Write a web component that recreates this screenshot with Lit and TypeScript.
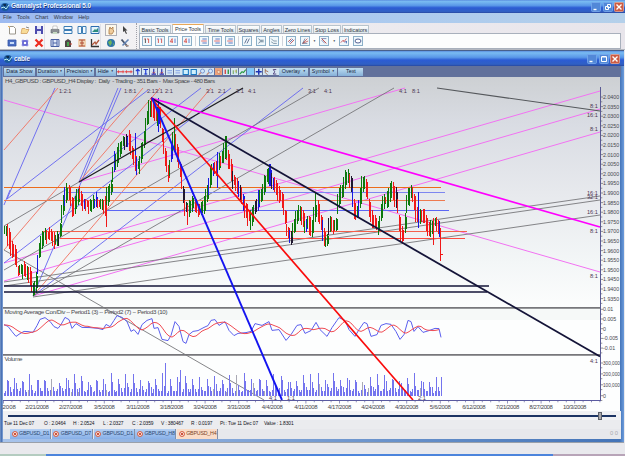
import { css, html, LitElement, svg, SVGTemplateResult } from 'lit';
import { customElement, property } from 'lit/decorators.js';
import { classMap } from 'lit/directives/class-map.js';
import { styleMap } from 'lit/directives/style-map.js';

type Point = [number, number];

// x1, y1, x2, y2, color, width
type Line = [number, number, number, number, string, number];

const BLUE = '#6464f0';
const RED = '#f0705f';
const PINK = '#f272f2';
const GRAY = '#77777b';
const NAVY = '#141438';

/** Center line of the price, the bars are built around it. */
const PRICE: Point[] = [
  [4, 233], [8, 232], [9, 243], [12, 252], [15, 254], [16, 268], [19, 272], [23, 268], [26, 273], [29, 270],
  [32, 293], [35, 285], [37, 278], [38, 262], [41, 243], [44, 235], [48, 236], [52, 237], [55, 242], [58, 236],
  [60, 240], [61, 228], [63, 204], [65, 196], [68, 190], [72, 206], [75, 210], [78, 193], [82, 200], [86, 205],
  [90, 206], [94, 200], [99, 204], [103, 203], [106, 210], [108, 192], [112, 185], [115, 160], [118, 153], [121, 145],
  [125, 142], [128, 137], [131, 150], [135, 160], [138, 168], [141, 158], [144, 140], [147, 122], [150, 103], [153, 110],
  [156, 116], [159, 112], [162, 142], [165, 160], [168, 176], [170, 172], [173, 137], [176, 150], [179, 165], [181, 185],
  [183, 203], [186, 213], [190, 205], [194, 202], [200, 213], [204, 205], [207, 192], [210, 180], [213, 166], [217, 172],
  [219, 158], [222, 160], [225, 149], [229, 160], [232, 180], [236, 185], [240, 193], [244, 206], [249, 220], [253, 212],
  [257, 205], [260, 195], [263, 190], [266, 180], [269, 172], [272, 182], [276, 190], [280, 195], [283, 205], [285, 230],
  [290, 238], [294, 228], [296, 218], [299, 214], [301, 209], [303, 228], [308, 220], [312, 233], [315, 212], [317, 205],
  [320, 220], [324, 243], [328, 242], [330, 218], [334, 228], [337, 222], [339, 195], [343, 186], [345, 180], [349, 175],
  [352, 202], [355, 212], [359, 210], [362, 184], [366, 182], [368, 208], [373, 220], [378, 228], [381, 218], [383, 202],
  [387, 203], [390, 192], [392, 187], [396, 200], [398, 225], [402, 235], [405, 236], [407, 205], [409, 195], [412, 192],
  [414, 213], [418, 216], [421, 213], [424, 217], [427, 225], [429, 230], [432, 224], [434, 223], [437, 221], [439, 230],
];

const MACD: Point[] = [
  [4, 325], [8, 326], [12, 332], [16, 336], [20, 334], [24, 331], [28, 332], [33, 332], [37, 326], [40, 319],
  [45, 318], [50, 321], [54, 327], [58, 328], [61, 325], [65, 317], [69, 320], [72, 328], [76, 324], [82, 327],
  [90, 328], [98, 328], [103, 330], [106, 324], [110, 327], [114, 320], [117, 316], [122, 317], [127, 322], [131, 331],
  [134, 330], [138, 334], [142, 325], [147, 320], [152, 319], [154, 328], [158, 328], [162, 339], [168, 341], [171, 335],
  [175, 322], [179, 326], [183, 342], [186, 343], [189, 335], [193, 331], [198, 331], [204, 327], [208, 326], [211, 320],
  [215, 320], [219, 325], [225, 322], [229, 330], [234, 336], [238, 333], [246, 333], [251, 331], [255, 324], [262, 325],
  [269, 322], [272, 330], [279, 330], [286, 340], [291, 335], [297, 325], [301, 325], [305, 333], [311, 331], [316, 322],
  [320, 330], [327, 336], [332, 328], [337, 320], [339, 318], [345, 320], [349, 330], [355, 336], [359, 330], [364, 322],
  [367, 324], [371, 336], [377, 335], [381, 325], [386, 324], [391, 324], [396, 332], [400, 339], [404, 335], [408, 320],
  [411, 322], [414, 331], [418, 327], [423, 332], [429, 331], [435, 328], [439, 329], [441, 337],
];

const THIN_LINES: Line[] = [
  [4, 100, 600, 272, PINK, 1],
  [79, 182, 405, 88, PINK, 1],
  [4, 263, 600, 91, PINK, 1],
  [4, 281, 600, 109, PINK, 1],
  [33, 296, 600, 132, PINK, 1],
  [7, 199, 55, 88, BLUE, 0.9],
  [7, 199, 148, 90, BLUE, 0.9],
  [79, 182, 118, 88, BLUE, 0.9],
  [33, 296, 121, 88, BLUE, 0.9],
  [4, 205, 10, 190, BLUE, 0.9],
  [79, 182, 201, 88, BLUE, 0.9],
  [4, 263, 231, 88, BLUE, 0.9],
  [33, 296, 303, 88, BLUE, 0.9],
  [4, 150, 58, 88, RED, 0.9],
  [4, 250, 143, 88, RED, 0.9],
  [79, 182, 160, 88, RED, 0.9],
  [33, 296, 211, 88, RED, 0.9],
  [4, 226, 79, 182, GRAY, 0.9],
  [4, 270, 319, 88, GRAY, 0.9],
  [33, 296, 394, 88, GRAY, 0.9],
  [4, 282, 600, 196, GRAY, 0.9],
  [4, 286, 600, 200, GRAY, 0.9],
  [33, 297, 600, 215, GRAY, 0.9],
  [437, 88, 600, 111, '#55585c', 1.2],
  [4, 250, 264, 400, GRAY, 0.9],
];

const LEVELS: Line[] = [
  [4, 187.5, 441, 187.5, '#ec6c1c', 1],
  [68, 192.5, 445, 192.5, '#7d86f0', 1],
  [4, 200.5, 445, 200.5, '#ee7a50', 1],
  [107, 210.5, 449, 210.5, '#5c66f4', 1],
  [43, 231.5, 467, 231.5, '#f4604c', 1],
  [60, 238.5, 465, 238.5, '#fc4c40', 1],
];

const BOLD_LINES: Line[] = [
  [79, 182, 243, 88, '#1c1c20', 1.3],
  [4, 286, 489, 286, NAVY, 1.5],
  [4, 292, 487, 292, NAVY, 1.5],
  [151, 98, 600, 227, '#ff00ff', 1.6],
  [151, 98, 600, 356.5, NAVY, 1.8],
  [151, 98, 413, 400, '#fa0a0a', 1.7],
  [152, 98, 282, 400, '#1414f0', 1.9],
];

const RATIOS: [number, number, string][] = [
  [59, 93, '1:2:1'], [124, 93, '1:8:1'], [147, 93, '2:1'], [155, 93, '3:1'], [165, 93, '2:1'],
  [206, 93, '3:1'], [218, 93, '2:1'], [236, 93, '3:1'], [248, 93, '4:1'], [308, 93, '3:1'],
  [324, 93, '4:1'], [399, 93, '4:1'], [412, 93, '8:1'],
  [590, 107.5, '8:1'], [587, 117, '16:1'], [590, 131, '8:1'], [587, 194.5, '16:1'], [587, 199, '32:1'],
  [587, 214, '16:1'], [590, 232.5, '8:1'], [590, 278, '8:1'], [590, 362.5, '4:1'],
  [269, 399.5, '4:1'], [287, 399.5, '1:1'], [418, 399.5, '2:1'],
];

const DATES = [
  '2/15/2008', '2/21/2008', '2/27/2008', '3/5/2008', '3/11/2008', '3/18/2008', '3/24/2008', '3/31/2008', '4/4/2008',
  '4/11/2008', '4/17/2008', '4/24/2008', '4/30/2008', '5/6/2008', '6/12/2008', '7/21/2008', '8/27/2008', '10/3/2008',
];

const ICONS: Record<string, SVGTemplateResult> = {
  app: svg`<circle cx="5" cy="5" r="4" fill="#1c5c9c"/><path d="M1 6l3-1 2 2 3-4" stroke="#b8ecf4" fill="none"/><path d="M3 2h3v2H4z" fill="#0b2c50"/>`,
  file: svg`<path d="M2.500 1.500h4l2 2v5.500h-6z" fill="#fff" stroke="#9a968c"/><path d="M1 1l2 2" stroke="#f0b050"/>`,
  open: svg`<path d="M1 8.500l1-5h3l1 1h3l-2 4z" fill="#f8dc98" stroke="#d0a060" stroke-width=".8"/><path d="M6 2l3 1" stroke="#888"/>`,
  save: svg`<path d="M1 1h8v8H1z" fill="#4c4cae"/><path d="M3 1h4v3H3zM3 6h4v3H3z" fill="#e4e6fa"/>`,
  print: svg`<path d="M1 4.500h8v3.500H1z" fill="#8c9094" stroke="#5f666c" stroke-width=".6"/><path d="M3 1h4l.5 3h-5z" fill="#fff" stroke="#999" stroke-width=".5"/><path d="M3 7h4v2H3z" fill="#c8dcc4"/>`,
  tileH: svg`<path d="M1 1.500h8v3H1zM1 5.500h8v3H1z" fill="#f4faff" stroke="#3c7cb4"/>`,
  tileV: svg`<path d="M1 1.500h3.500v7H1zM5.500 1.500H9v7H5.500z" fill="#f4faff" stroke="#3c7cb4"/>`,
  picture: svg`<path d="M1 1.500h8v7H1z" fill="#e4f4fc" stroke="#2c6cb0"/><path d="M2 7l3-3 1 1 2-2v4z" fill="#2c8c7c"/>`,
  hand: svg`<path d="M3 9V5l1-3 1 2 2-2v3l1 1-2 3z" fill="#f0cc9c" stroke="#a87848" stroke-width=".8"/>`,
  arrow: svg`<path d="M3 1v6l1.500-1 1.500 3 1-.5-1.500-3h2z" fill="#444"/>`,
  monitor: svg`<path d="M1 2h8v6H1z" fill="#4c70c4" stroke="#3454a4" stroke-width=".8"/><path d="M3 4h4v2H3z" fill="#c8dcfa"/>`,
  square: svg`<path d="M3 3h4v4H3z" fill="#fff" stroke="#3c3cc4" stroke-width="1.500"/><path d="M1 3h8M1 7h8M3 1v8M7 1v8" stroke="#8c8ce4" stroke-width=".5"/>`,
  cross: svg`<path d="M1.500 1.500l7 7M8.500 1.500l-7 7" stroke="#ec2c20" stroke-width="2.200"/>`,
  film: svg`<path d="M1 1.500h8v7H1z" fill="#e0e8f8" stroke="#4860a4"/><path d="M3 1v8M7 1v8M3 5h4" stroke="#4860a4"/>`,
  door: svg`<path d="M2 9V3l3-2 3 2v6z" fill="#504848"/><path d="M4 4h2v4H4z" fill="#48a450"/><path d="M6 6h3" stroke="#c43c2c"/>`,
  clock: svg`<path d="M1 1h8v8H1z" fill="#f0d4b4"/><path d="M2 2h6M5 2v6M2 8h6M3 5h4" stroke="#b04c34"/>`,
  graph: svg`<path d="M1.500 1v7.500H9" stroke="#333" fill="none" stroke-width="1.300"/><path d="M2 7l3-3 1 2 3-4" stroke="#b0583c" fill="none" stroke-width="1.300"/>`,
  globe: svg`<circle cx="5" cy="5" r="4" fill="#2c74a8"/><path d="M2 4l3-2 1 3-2 3zM7 5l1 1-1 2z" fill="#70b45c"/>`,
  tools: svg`<path d="M1.500 1.500l6 7" stroke="#48546c" fill="none" stroke-width="1.900"/><path d="M8.500 1.500l-6 6" stroke="#6484b4" stroke-width="1.600"/><path d="M5 7l4 1" stroke="#b49484"/>`,
  range1: svg`<path d="M3 2v5.500" stroke="#333"/><path d="M1.500 2.500h1.500M5 2.500h2v5" stroke="#d83c34" fill="none"/>`,
  range2: svg`<path d="M3 2v5.500M7 2v5.500" stroke="#d83c34"/><path d="M1.500 2.500h1M5.500 2.500h1" stroke="#3c54c4"/>`,
  range4: svg`<path d="M4 2L1.500 6h3.500M4 2v5.500" stroke="#d83c34" fill="none" stroke-width=".9"/><path d="M7.500 2v5.500" stroke="#4460c4"/>`,
  bars: svg`<path d="M3 2.500h5.500M3 7.500h5.500" stroke="#3858b4"/><path d="M1.500 5h7" stroke="#e05050"/>`,
  parallel: svg`<path d="M2 8l3-6M5 8l3-6" stroke="#48587c"/>`,
  fan: svg`<path d="M1.500 2l3 2h4M1.500 8l3-2h4M3 5h4" stroke="#48647c" fill="none" stroke-width=".8"/>`,
  fan2: svg`<path d="M1.500 2l3 3h4M1.500 6l3 2h4" stroke="#48647c" fill="none" stroke-width=".8"/>`,
  hatch: svg`<path d="M1.500 6l4-4M4 8.500l5-5" stroke="#b43c44"/><path d="M3 7l4.500-4.500" stroke="#4c64a4"/>`,
  gann: svg`<path d="M2 8l6-6M2 8l7-3" stroke="#c4504c"/><path d="M2 8l3-6M2 8h6" stroke="#4c5c7c" stroke-width=".8"/>`,
  gann2: svg`<path d="M2 2l6 6" stroke="#c4504c" stroke-width="1.200"/><path d="M2 2h6M2 4l4 4" stroke="#4c5c94" stroke-width=".8"/>`,
  wave: svg`<path d="M1 7l3-3 1 2 3-4" stroke="#c43c44" fill="none"/><path d="M6 7l2-2v3" stroke="#3454a4" fill="none"/>`,
  ellipse: svg`<ellipse cx="5" cy="5" rx="3.700" ry="2.500" fill="#fff" stroke="#3c4c84" stroke-width="1.100"/>`,
  inOut: svg`<path d="M0 5h10" stroke="#e83c3c" stroke-width="1.400"/><path d="M2 3v4M8 3v4" stroke="#e83c3c"/>`,
  up: svg`<path d="M5 9V2M2.500 4L5 1.500 7.500 4" stroke="#1c34d4" fill="none" stroke-width="1.500"/>`,
  upBar: svg`<path d="M2 2h6M5 2v7M3 8h4" stroke="#1c34d4" stroke-width="1.500"/>`,
  down: svg`<path d="M5 1v7M2 8h6" stroke="#2c2cb0" stroke-width="1.600"/><path d="M3 5l2 2 2-2" stroke="#c44" fill="none"/>`,
  minus: svg`<path d="M2 3.500h6M2 6.500h6" stroke="#7c9ce4" stroke-width="1.200"/>`,
  window: svg`<path d="M1.500 2h7v6.500h-7z" fill="#cff0fc" stroke="#1878c4" stroke-width="1.400"/>`,
  zoom: svg`<circle cx="6" cy="4" r="2.700" fill="#d4e8fc" stroke="#5c7cc4"/><path d="M4 6L1 9" stroke="#c48c7c" stroke-width="1.700"/>`,
  palm: svg`<path d="M0 0h10v10H0z" fill="#f0a47c"/><path d="M3 3l4 1-1 4-3-2z" fill="#fce4c4" stroke="#b0583c" stroke-width=".6"/>`,
  candles: svg`<path d="M3 2v6" stroke="#d42c2c" stroke-width="1.600"/><path d="M7 2v6" stroke="#1c8c2c" stroke-width="1.600"/>`,
  ohlc: svg`<path d="M3 3v5M7 2v5" stroke="#6ca44c" stroke-width="1.300"/><path d="M5 4h2" stroke="#e8a030"/>`,
  trend: svg`<path d="M1 8l3-3 2 1 3-4" stroke="#2c9c44" fill="none" stroke-width="1.500"/>`,
  cyan: svg`<path d="M0 0h10v10H0z" fill="#84c8f8"/>`,
  plus: svg`<path d="M5 1v8M1 5h8" stroke="#1c34b4" stroke-width="2"/>`,
  curve: svg`<path d="M3 1v5l3 3M3 3l4 2" stroke="#a46c4c" fill="none" stroke-width="1.200"/>`,
  sigma: svg`<path d="M7 2H3l2 3-2 3h4" stroke="#4c3c7c" fill="none" stroke-width="1.200"/>`,
};

function seeded(seed: number) {
  return () => {
    seed = (seed * 16807) % 2147483647;
    return seed / 2147483647;
  };
}

function valueAt(points: Point[], x: number) {
  for (let i = 1; i < points.length; i++) {
    const [x1, y1] = points[i - 1];
    const [x2, y2] = points[i];
    if (x <= x2) return y1 + ((y2 - y1) * (x - x1)) / (x2 - x1);
  }
  return points[points.length - 1][1];
}

@customElement('tool-icon')
export class ToolIcon extends LitElement {
  static styles = css`
    :host {
      display: block;
      width: 10px;
      height: 10px;
      flex: none;
    }

    svg {
      display: block;
      width: 100%;
      height: 100%;
    }
  `;

  @property({ type: String })
  name = 'file';

  protected render() {
    return html`<svg viewBox="0 0 10 10">${ICONS[this.name]}</svg>`;
  }
}

@customElement('window-controls')
export class WindowControls extends LitElement {
  static styles = css`
    :host {
      display: flex;
      gap: 1.5px;
    }

    svg {
      width: 10px;
      height: 10px;
      display: block;
    }
  `;

  @property({ type: Boolean })
  restore = false;

  protected render() {
    const frame = svg`<rect x=".5" y=".5" width="9" height="9" rx="1" fill="#5288d8" stroke="#78aaec" stroke-width=".8"/>`;
    return html`
      <svg viewBox="0 0 10 10">${frame}<path d="M2.500 7.500h3" stroke="#fff" stroke-width="1.400" /></svg>
      <svg viewBox="0 0 10 10">
        ${frame}
        ${this.restore
          ? svg`<path d="M4.500 2.500h3v3h-3zM2.500 4.500h3v3h-3z" fill="#5288d8" stroke="#fff"/>`
          : svg`<path d="M2.500 3h5v4.500h-5zM2.500 2.500h5" fill="none" stroke="#fff"/>`}
      </svg>
      <svg viewBox="0 0 10 10">
        <rect x=".5" y=".5" width="9" height="9" rx="1" fill="#cc5c44" stroke="#e8a490" stroke-width=".8" />
        <path d="M2.500 2.500l5 5M7.500 2.500l-5 5" stroke="#fff" stroke-width="1.400" />
      </svg>
    `;
  }
}

@customElement('price-chart')
export class PriceChart extends LitElement {
  static styles = css`
    :host {
      display: block;
      flex: none;
      width: 617px;
      height: 334px;
    }

    svg {
      display: block;
      overflow: visible;
    }

    text {
      font-family: 'Liberation Sans', Arial, sans-serif;
      font-size: 6.2px;
      fill: #48484e;
    }

    .ratio {
      font-size: 5.6px;
      fill: #4c3450;
    }

    .axis {
      font-size: 6px;
    }

    .scale {
      font-size: 5.3px;
    }

    .scale.long {
      font-size: 4.7px;
    }
  `;

  private lines(lines: Line[]) {
    return lines.map(
      ([x1, y1, x2, y2, color, width]) =>
        svg`<line x1=${x1} y1=${y1} x2=${x2} y2=${y2} stroke=${color} stroke-width=${width} />`,
    );
  }

  private candles() {
    const random = seeded(77);
    const result: SVGTemplateResult[] = [];
    let i = 0;
    for (let x = 4; x < 440; x += 1.5) {
      const open = valueAt(PRICE, x - 0.8);
      const close = valueAt(PRICE, x + 1.6);
      const noise = (random() - 0.5) * 5;
      const top = Math.min(open, close) + noise - 2;
      const height = Math.min(12, Math.abs(close - open) + 3 + random() * 3);
      const pick = random();
      let color = close > open ? '#f01818' : '#0c780c';
      if (pick > 0.93) color = '#1a1ae0';
      else if (pick > 0.87) color = '#201830';
      const wick = 1 + random() * 4;
      result.push(svg`
        <rect x=${Math.round(x)} y=${top - wick} width="1" height=${height + wick * 2} fill=${color} />
        <rect x=${Math.round(x)} y=${top} width=${i % 2 ? 2 : 1} height=${height} fill=${color} />
      `);
      i++;
    }
    // single long bars
    const spikes: Line[] = [
      [106, 205, 106, 227, '#f01818', 1],
      [135.5, 133, 135.5, 155, '#1a1ae0', 1.2],
      [158.5, 98, 158.5, 132, '#1a1ae0', 1.2],
      [174.5, 118, 174.5, 150, '#0c780c', 1.2],
      [187.5, 205, 187.5, 225, '#f01818', 1],
      [217.5, 152, 217.5, 188, '#1a1ae0', 1.2],
      [226, 136, 226, 158, '#0c780c', 1.2],
      [270, 164, 270, 186, '#1a1ae0', 1.2],
      [315.5, 192, 315.5, 222, '#0c780c', 1.2],
      [418.5, 192, 418.5, 228, '#1a1ae0', 1.4],
      [433.5, 218, 433.5, 245, '#f01818', 1],
      [440.5, 228, 440.5, 261, '#f01818', 1.2],
      [440, 254.5, 443, 254.5, '#f01818', 1],
    ];
    return [result, this.lines(spikes)];
  }

  private volume() {
    const random = seeded(421);
    const shape = [5, 7, 20, 14, 8];
    const result: SVGTemplateResult[] = [];
    let i = 0;
    for (let x = 4; x < 441; x += 1.48) {
      let height = shape[i % 5] * (0.65 + random() * 0.5);
      if (Math.abs(x - 165) < 0.74) height = 33;
      if (Math.abs(x - 180) < 0.74) height = 26;
      if (x > 439.8) height = 19;
      const color = random() > 0.93 ? '#a9a9b4' : '#7474ee';
      result.push(svg`<rect x=${x} y=${396 - height} width="1" height=${height} fill=${color} />`);
      i++;
    }
    return result;
  }

  private signal() {
    const points: string[] = [];
    for (let x = 4; x < 440; x += 3) {
      let sum = 0;
      for (let k = 0; k < 8; k++) sum += valueAt(MACD, Math.max(4, x - k * 1.8));
      points.push(`${x},${(sum / 8).toFixed(1)}`);
    }
    return points.join(' ');
  }

  private axes() {
    const price = Array.from({ length: 22 }, (_, i) => ({ y: 97 + i * 9.6, label: (2.04 - i * 0.005).toFixed(4) }));
    const macd = ['0.01', '0.005', '0', '-0.005', '-0.01'].map((label, i) => ({ y: 309.3 + i * 9.7, label }));
    const volume = ['300,000', '200,000', '100,000', '0'].map((label, i) => ({ y: 363 + i * 10.9, label }));
    return svg`
      <path d="M600.500 87V400.500" stroke="#5a5a94" />
      ${[...price, ...macd, ...volume].map(
        ({ y, label }) => svg`
          <path d="M601 ${y}h2.200M601 ${y + 4.8}h1.300" stroke="#66666e" stroke-width=".7" />
          <text class=${label.length > 6 ? 'scale long' : 'scale'} x="603" y=${y + 2}>${label}</text>`,
      )}
      <path d="M3 400.500H601" stroke="#5a5aa0" />
      ${DATES.map((date, i) => {
        const x = 3.5 + i * 33.6;
        return svg`
          <path d="M${x} 401v2.500M${x + 8.4} 401v1.300M${x + 16.8} 401v1.300M${x + 25.2} 401v1.300" stroke="#66669c" stroke-width=".7" />
          ${i === 0
            ? svg`<text class="axis" x="2.500" y="408.800">2008</text>`
            : svg`<text class="axis" x=${x} y="408.800" text-anchor="middle" textLength=${date.length > 8 ? 23.5 : 21}>${date}</text>`}`;
      })}
    `;
  }

  protected render() {
    return html`
      <svg width="617" height="334" viewBox="3 77 617 334">
        <defs>
          <linearGradient id="sky" x1="0" y1="0" x2="0" y2="1">
            <stop offset="0" stop-color="#cdd0d3" />
            <stop offset=".2" stop-color="#d9dce3" />
            <stop offset=".5" stop-color="#e7e9ed" />
            <stop offset=".8" stop-color="#f3f6f7" />
            <stop offset="1" stop-color="#fcfdfd" />
          </linearGradient>
        </defs>
        <rect x="3" y="77" width="617" height="334" fill="#fdfefe" />
        <rect x="3" y="77" width="617" height="231" fill="url(#sky)" />
        <rect x="3" y="308" width="597" height="12" fill="#f6f9f8" />
        <path d="M3 307.800H600M3 354.800H600" stroke="#77777b" stroke-width="1.700" />
        ${this.lines(THIN_LINES)} ${this.lines(LEVELS)}
        <g shape-rendering="crispEdges">${this.candles()} ${this.volume()}</g>
        <polyline
          points=${MACD.map(([x, y], i) => `${x},${y + (i % 2 ? 0.4 : -0.4)}`).join(' ')}
          fill="none"
          stroke="#5c60ee"
        />
        <polyline points=${this.signal()} fill="none" stroke="#f04c54" />
        ${this.lines(BOLD_LINES)} ${this.axes()}
        <text x="5" y="83.300" textLength="210" xml:space="preserve">H4_GBPUSD : GBPUSD_H4 Display :  Daily  - Trading - 351 Bars -  Max Space - 480 Bars</text>
        <text x="4.500" y="313.800" textLength="163">Moving Average Con/Div -- Period1 (3) -- Period2 (7) -- Period3 (10)</text>
        <text x="4.500" y="360.800" textLength="18">Volume</text>
        ${RATIOS.map(([x, y, label]) => svg`<text class="ratio" x=${x} y=${y}>${label}</text>`)}
      </svg>
    `;
  }
}

@customElement('app-root')
export class AppRoot extends LitElement {
  static styles = css`
    :host {
      display: flex;
      flex-direction: column;
      width: 625px;
      height: 456px;
      overflow: hidden;
      background: #e9e9ed;
      font: 5.8px/1 'Liberation Sans', Arial, sans-serif;
      color: #303844;
      white-space: nowrap;
      box-sizing: border-box;
    }

    .titlebar {
      display: flex;
      align-items: center;
      flex: none;
      box-sizing: border-box;
      height: 13px;
      padding: 0 1px 0 0;
      gap: 1px;
      color: #eef6ff;
      font-weight: bold;
      font-size: 6.5px;
      letter-spacing: -0.12px;
      text-shadow: 0.5px 0.5px #18387c;
      background: linear-gradient(#5c90e0 0, #79bbf2 12%, #5a98e8 42%, #2c5cd4 60%, #3060c4 88%, #2848a0);
    }

    .titlebar .label {
      flex: 1;
    }

    .menu {
      display: flex;
      align-items: center;
      flex: none;
      height: 10px;
      padding-left: 3px;
      gap: 5.4px;
      font-size: 5.4px;
      background: linear-gradient(90deg, #9dbaf0, #a9c8f0 50%, #b4d0ea);
    }

    .tools {
      display: flex;
      flex: none;
      height: 27px;
      box-sizing: border-box;
      background: linear-gradient(90deg, #fafafa, #f0eff2 25%, #e8e5eb);
      border-bottom: 1px solid #b4b8c0;
    }

    .groups {
      display: flex;
      width: 137px;
      box-sizing: border-box;
      padding: 1px 0 0 7px;
      gap: 5px;
      border-right: 1px dotted #a0a0a8;
    }

    .group {
      display: grid;
      grid-auto-flow: column;
      grid-template-rows: 12.5px 12.5px;
      column-gap: 3.3px;
      align-items: center;
      padding-right: 0.5px;
      border-right: 1px solid #e0e0e6;
    }

    .group:last-child {
      border: none;
    }

    .pressed {
      background: #fdf8ec;
      outline: 1px solid #b0b0b8;
    }

    .panel {
      flex: 1;
      display: flex;
      flex-direction: column;
      padding: 1px 4px 0 2px;
    }

    .tabs {
      display: flex;
      height: 9px;
      align-items: flex-end;
      gap: 1px;
    }

    .tab {
      height: 8px;
      line-height: 8.5px;
      box-sizing: border-box;
      text-align: center;
      font-size: 5.5px;
      letter-spacing: -0.06px;
      border: 1px solid #b8c4cc;
      border-bottom: none;
      border-radius: 1px 1px 0 0;
      background: linear-gradient(#fdfdfd, #dce6ec);
    }

    .tab.active {
      height: 9px;
      background: #fff;
      border-top-color: #e8a858;
    }

    .strip {
      display: flex;
      align-items: center;
      box-sizing: border-box;
      height: 16px;
      padding-left: 1.5px;
      gap: 3.4px;
      background: #fcfdfd;
      border: 1px solid #a8b0bc;
    }

    .strip tool-icon {
      width: 8px;
      height: 8px;
      border: 0.8px solid #8cb0c8;
      background: #f0f8fc;
    }

    .divider {
      width: 1px;
      height: 10px;
      margin: 0 -0.4px;
      background: #d0d4dc;
    }

    .caret {
      font-size: 3px;
      width: 3px;
    }

    .child {
      display: flex;
      flex-direction: column;
      flex: none;
      height: 393px;
      box-sizing: border-box;
      padding: 0 3px 3px;
      margin-right: 1px;
      background: linear-gradient(90deg, #7a98c8, #3c68b0 2px, #a8c4ec 3px, #4474b8 620px, #6c9cdc);
      border-top: 1px solid #48608c;
      border-bottom: 1px solid #9aa0aa;
    }

    .child .titlebar {
      height: 15px;
      margin: 0 -3px;
      padding: 1px 4px 0 3px;
    }

    .buttons {
      display: flex;
      align-items: center;
      flex: none;
      height: 11px;
      padding-left: 1px;
      gap: 0.6px;
      background: #62719b;
    }

    .button {
      display: flex;
      align-items: center;
      justify-content: space-evenly;
      box-sizing: border-box;
      height: 8px;
      margin-right: 1px;
      font-size: 5.4px;
      color: #17243c;
      background: linear-gradient(#bcdcf0, #86b0d8);
    }

    .button i {
      font-size: 3px;
      font-style: normal;
    }

    .buttons tool-icon {
      width: 7.5px;
      height: 7.6px;
      background: #d5e6f2;
    }

    .slider {
      display: flex;
      align-items: center;
      flex: none;
      height: 9px;
      padding: 0 4px 0 5px;
      background: #f0f1f4;
    }

    .track {
      height: 2px;
      background: #1c3464;
    }

    .track.left {
      width: 590px;
    }

    .track.right {
      width: 14px;
    }

    .thumb {
      width: 2px;
      height: 6px;
      background: #a8a8ac;
      border: 1px solid #5c6068;
    }

    .status {
      display: flex;
      flex: none;
      height: 9px;
      padding-left: 1px;
      align-items: center;
      font-size: 4.9px;
      letter-spacing: -0.12px;
      color: #14141c;
      background: #ebecef;
    }

    .sheets {
      display: flex;
      flex: none;
      height: 10px;
      padding: 0 3px 0 7px;
      gap: 0.8px;
      align-items: flex-start;
      background: #e7e8ec;
    }

    .sheet {
      display: flex;
      align-items: center;
      gap: 1.5px;
      width: 41px;
      height: 9.5px;
      box-sizing: border-box;
      padding-left: 1.5px;
      border-right: 1px solid #8490a8;
      color: #2c4870;
      font-size: 5.3px;
      letter-spacing: -0.2px;
      background: linear-gradient(#b4d0f4, #88b0e8);
    }

    .sheet.active {
      color: #7c4424;
      background: #fadcc8;
    }

    .sheet svg {
      width: 6px;
      height: 6px;
      flex: none;
    }

    .corner {
      margin-left: auto;
      line-height: 9px;
      color: #a8a8ae;
    }

    .taskbar {
      display: flex;
      margin-top: auto;
      height: 2px;
    }

    .taskbar .start {
      width: 46px;
      background: #b4ccc0;
    }

    .taskbar .open {
      width: 507px;
      background: #4c84dc;
    }

    .taskbar .tray {
      flex: 1;
      background: #b8a4b8;
    }
  `;

  private tabs: [string, number][] = [
    ['Basic Tools', 32], ['Price Tools', 32], ['Time Tools', 31], ['Squares', 23],
    ['Angles', 21], ['Zero Lines', 29], ['Stop Loss', 28], ['Indicators', 27],
  ];

  private groups = [
    ['file', 'monitor', 'open', 'square', 'save', 'cross'],
    ['print', 'film', 'tileH', 'door', 'tileV', 'clock', 'picture', 'graph'],
    ['hand', 'globe', 'arrow', 'tools'],
  ];

  private strip = [
    'range1', 'range2', 'range4', 'range4', '|', 'bars', 'bars', 'bars', '|', 'parallel', 'fan', 'fan2', '|',
    'hatch', 'gann', 'v', 'gann2', 'v', 'wave', 'ellipse',
  ];

  private chartIcons = [
    'inOut', 'inOut', 'up', 'upBar', 'down', 'down', 'minus', 'minus', 'window', 'window', 'zoom', 'zoom', 'palm',
    'candles', 'ohlc', 'trend', 'cyan', 'plus', 'curve', 'sigma',
  ];

  private status: [string, number][] = [
    ['Tue 11 Dec 07', 40], ['O : 2.0464', 29], ['H : 2.0524', 30], ['L : 2.0327', 29], ['C : 2.0359', 29],
    ['V : 380467', 30], ['R : 0.0197', 29], ['Pt : Tue 11 Dec 07', 44], ['Value : 1.8301', 40],
  ];

  private button(label: string, width: number, menu = true) {
    return html`<div class="button" style=${styleMap({ width: `${width}px` })}>
      <span>${label}</span>${menu ? html`<i>▼</i>` : ''}
    </div>`;
  }

  private stripItem(name: string) {
    if (name === '|') return html`<span class="divider"></span>`;
    if (name === 'v') return html`<span class="caret">▼</span>`;
    return html`<tool-icon name=${name}></tool-icon>`;
  }

  protected render() {
    return html`
      <div class="titlebar">
        <tool-icon name="app"></tool-icon>
        <span class="label">Gannalyst Professional 5.0</span>
        <window-controls restore></window-controls>
      </div>
      <div class="menu">
        ${['File', 'Tools', 'Chart', 'Window', 'Help'].map(item => html`<span>${item}</span>`)}
      </div>
      <div class="tools">
        <div class="groups">
          ${this.groups.map(
            group => html`<div class="group">
              ${group.map(
                name => html`<tool-icon class=${classMap({ pressed: name === 'hand' })} name=${name}></tool-icon>`,
              )}
            </div>`,
          )}
        </div>
        <div class="panel">
          <div class="tabs">
            ${this.tabs.map(
              ([label, width], i) =>
                html`<div class=${classMap({ tab: true, active: i === 1 })} style=${styleMap({ width: `${width}px` })}>
                  ${label}
                </div>`,
            )}
          </div>
          <div class="strip">${this.strip.map(name => this.stripItem(name))}</div>
        </div>
      </div>
      <div class="child">
        <div class="titlebar">
          <tool-icon name="app"></tool-icon>
          <span class="label">cable</span>
          <window-controls></window-controls>
        </div>
        <div class="buttons">
          ${this.button('Data Show', 31, false)} ${this.button('Duration', 27)} ${this.button('Precision', 29)}
          ${this.button('Hide', 20)} ${this.chartIcons.map(name => html`<tool-icon name=${name}></tool-icon>`)}
          ${this.button('Overlay', 29)} ${this.button('Symbol', 27)} ${this.button('Text', 25, false)}
        </div>
        <price-chart></price-chart>
        <div class="slider">
          <div class="track left"></div>
          <div class="thumb"></div>
          <div class="track right"></div>
        </div>
        <div class="status">
          ${this.status.map(
            ([label, width]) => html`<span style=${styleMap({ width: `${width}px` })}>${label}</span>`,
          )}
        </div>
        <div class="sheets">
          ${['GBPUSD_D1', 'GBPUSD_D7', 'GBPUSD_D1', 'GBPUSD_H8', 'GBPUSD_H4'].map(
            (sheet, i) => html`<div class=${classMap({ sheet: true, active: i === 4 })}>
              <svg viewBox="0 0 6 6">
                <circle cx="3" cy="3" r="2.500" fill="#fae4dc" stroke="#d45438" stroke-width=".9" />
                <path d="M1.800 1.800l2.400 2.400M4.200 1.800L1.800 4.200" stroke="#c84028" stroke-width=".9" />
              </svg>
              ${sheet}
            </div>`,
          )}
          <span class="corner">0 0</span>
        </div>
      </div>
      <div class="taskbar">
        <div class="start"></div>
        <div class="open"></div>
        <div class="tray"></div>
      </div>
    `;
  }
}
